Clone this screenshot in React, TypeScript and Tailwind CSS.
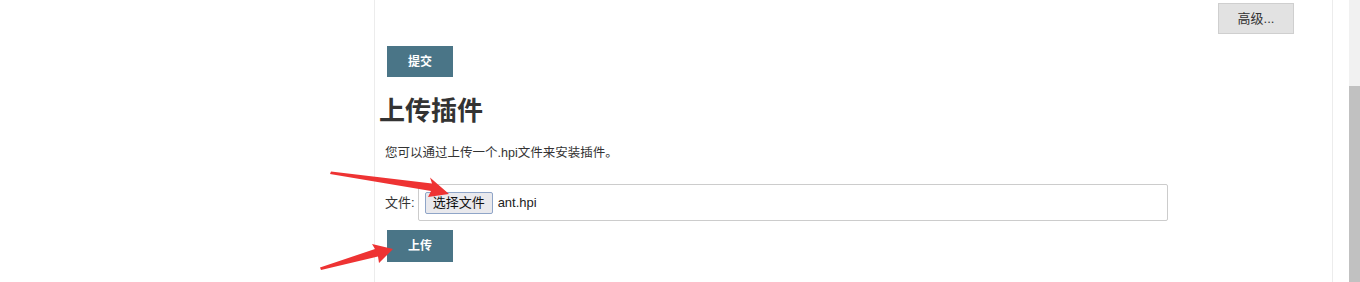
export default function App() {
  const font = { fontFamily: '"Liberation Sans", "Noto Sans CJK SC", sans-serif' };

  return (
    <div className="relative h-[282px] w-[1360px] overflow-hidden bg-white text-[#333]" style={font}>
      <div className="flex h-full">
        {/* 左侧空白 */}
        <div className="w-[374px] shrink-0" />

        {/* 主内容 */}
        <div className="flex h-full w-[959px] shrink-0 flex-col border-x border-[#ececec]">
          <div className="flex justify-end pr-[38px] pt-[3px]">
            <button className="h-[31px] w-[76px] border border-[#cfcfcf] bg-[#e2e2e2] text-[13px] text-[#333]">
              高级...
            </button>
          </div>

          <div className="pl-[12px] pt-[12px]">
            <button className="h-[31px] w-[66px] bg-[#4a7587] text-[12px] font-bold text-white">
              提交
            </button>
          </div>

          <h1 className="mt-[17px] pl-[4px] text-[26px] font-bold leading-[34px] text-[#333]">
            上传插件
          </h1>

          <p className="mt-[16px] pl-[10px] text-[12.5px] leading-[18px] text-[#333]">
            您可以通过上传一个.hpi文件来安装插件。
          </p>

          <div className="mt-[22px] flex items-center pl-[10px]">
            <span className="mr-[3px] text-[13px] text-[#333]">文件:</span>
            <div className="flex h-[37px] w-[750px] items-center rounded-[2px] border border-[#cccccc] pl-[6px]">
              <span className="flex h-[22px] items-center rounded-[2px] border border-[#8fa5c8] bg-[#e9e9ed] px-[7px] text-[13px] text-[#111]">
                选择文件
              </span>
              <span className="ml-[5px] text-[13px] text-[#222]">ant.hpi</span>
            </div>
          </div>

          <div className="mt-[9px] pl-[12px]">
            <button className="h-[32px] w-[66px] bg-[#4a7587] text-[12px] font-bold text-white">
              上传
            </button>
          </div>
        </div>

        {/* 滚动条 */}
        <div className="w-[16px] shrink-0" />
        <div className="flex w-[11px] shrink-0 flex-col">
          <div className="h-[86px] bg-[#f1f1f1]" />
          <div className="flex-1 bg-[#c1c1c1]" />
        </div>
      </div>

      {/* 红色箭头标注 */}
      <svg className="pointer-events-none absolute left-0 top-0" width="1360" height="282">
        <polygon points="331,171.5 432,183.5 430,177.5 449,194 428,197 431,191 330,174" fill="#ee3333" />
        <polygon points="320,267.5 375,249 372,244 393,249 379,263 378,256.5 321,270" fill="#ee3333" />
      </svg>
    </div>
  );
}
